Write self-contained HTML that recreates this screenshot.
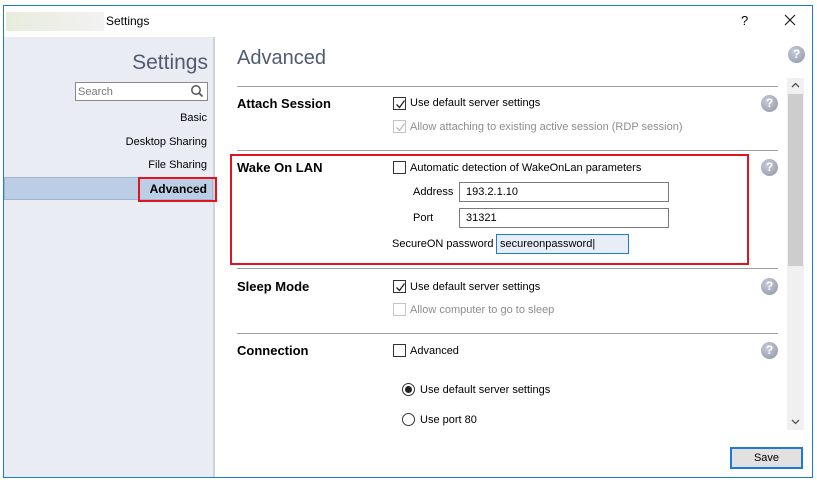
<!DOCTYPE html>
<html><head><style>
*{margin:0;padding:0;box-sizing:border-box}
body{width:817px;height:482px;background:#fff;position:relative;overflow:hidden;font-family:"Liberation Sans",sans-serif;font-size:11px;color:#000}
.a{position:absolute}
.t{position:absolute;white-space:nowrap}
.sep{position:absolute;left:237px;width:541px;height:1px;background:#a0a0a0}
.cb{position:absolute;width:13px;height:13px;border:1px solid #333;background:#fff}
.cb.g{border-color:#c4c4c4}
.cb svg{position:absolute;left:1px;top:1px}
.hl{position:absolute;width:17px;height:17px;border-radius:50%;background:radial-gradient(circle at 40% 35%,#c8ccd8,#8e94a8);color:#fff;font-weight:bold;font-size:12px;text-align:center;line-height:17px}
.in{position:absolute;height:20px;border:1px solid #7a7a7a;background:#fff;padding-left:6px;line-height:18px}
.b{font-weight:bold;font-size:13px}
.rad{position:absolute;width:13px;height:13px;border:1px solid #333;border-radius:50%;background:#fff}
</style></head><body>
<div class="a" style="left:3px;top:5px;width:810px;height:473px;border:1px solid #1e7ad6"></div>
<div class="a" style="left:6px;top:12px;width:98px;height:19px;background:linear-gradient(90deg,#e8ecdc,#f2f2f2)"></div>
<div class="t" style="left:106px;top:14px;font-size:12px">Settings</div>
<div class="t" style="left:741px;top:13px;font-size:13px">?</div>
<svg class="a" style="left:784px;top:14px" width="12" height="12"><path d="M1 1L11 11M11 1L1 11" stroke="#111" stroke-width="1.1"/></svg>
<div class="a" style="left:4px;top:37px;width:211px;height:440px;background:#e9edf3;border-right:2px solid #d0d4da"></div>
<div class="t" style="right:609px;top:51px;font-size:21px;color:#4f5b73">Settings</div>
<div class="a" style="left:75px;top:82px;width:133px;height:19px;border:1px solid #8a8a8a;background:#fff"></div>
<div class="t" style="left:78px;top:86px;color:#777">Search</div>
<svg class="a" style="left:190px;top:84px" width="14" height="14"><circle cx="6" cy="6" r="4.2" fill="none" stroke="#555" stroke-width="1.5"/><line x1="9" y1="9" x2="12.5" y2="12.5" stroke="#555" stroke-width="1.8"/></svg>
<div class="t" style="right:610px;top:112px">Basic</div>
<div class="t" style="right:610px;top:136px">Desktop Sharing</div>
<div class="t" style="right:610px;top:159px">File Sharing</div>
<div class="a" style="left:4px;top:177px;width:209px;height:23px;background:#bccde6;border:1px solid #9fb5d5"></div>
<div class="t b" style="right:610px;top:182px;font-size:12px">Advanced</div>
<div class="a" style="left:138px;top:177px;width:79px;height:25px;border:2px solid #e0141e"></div>
<div class="t" style="left:237px;top:47px;font-size:20px;color:#4f5b73">Advanced</div>
<div class="hl" style="left:788px;top:46px">?</div>
<div class="a" style="left:787px;top:78px;width:17px;height:352px;background:#f0f0f0"></div>
<div class="a" style="left:788px;top:94px;width:15px;height:172px;background:#cdcdcd"></div>
<svg class="a" style="left:791px;top:82px" width="9" height="6"><path d="M1 5L4.5 1.5 8 5" fill="none" stroke="#555" stroke-width="1.3"/></svg>
<svg class="a" style="left:791px;top:419px" width="9" height="6"><path d="M1 1L4.5 4.5 8 1" fill="none" stroke="#555" stroke-width="1.3"/></svg>
<div class="sep" style="top:86px"></div>
<div class="sep" style="top:150px"></div>
<div class="sep" style="top:268px"></div>
<div class="sep" style="top:333px"></div>
<div class="t b" style="left:237px;top:96px">Attach Session</div>
<div class="cb" style="left:393px;top:97px"><svg width="11" height="11"><path d="M1.5 5.5l3 3 5-7" fill="none" stroke="#222" stroke-width="1.3"/></svg></div>
<div class="t" style="left:410px;top:97px">Use default server settings</div>
<div class="cb g" style="left:393px;top:120px"><svg width="11" height="11"><path d="M1.5 5.5l3 3 5-7" fill="none" stroke="#bbb" stroke-width="1.3"/></svg></div>
<div class="t" style="left:410px;top:121px;color:#8d8d8d">Allow attaching to existing active session (RDP session)</div>
<div class="hl" style="left:761px;top:95px">?</div>
<div class="a" style="left:230px;top:154px;width:519px;height:111px;border:2px solid #e0141e"></div>
<div class="t b" style="left:237px;top:160px">Wake On LAN</div>
<div class="cb" style="left:393px;top:161px"></div>
<div class="t" style="left:410px;top:162px">Automatic detection of WakeOnLan parameters</div>
<div class="hl" style="left:761px;top:159px">?</div>
<div class="t" style="left:413px;top:186px">Address</div>
<div class="in" style="left:459px;top:182px;width:210px">193.2.1.10</div>
<div class="t" style="left:413px;top:212px">Port</div>
<div class="in" style="left:459px;top:208px;width:210px">31321</div>
<div class="t" style="left:392px;top:238px">SecureON password</div>
<div class="in" style="left:496px;top:234px;width:133px;border-color:#1e7ad6;background:#e8eef8;padding-left:3px">secureonpassword|</div>
<div class="t b" style="left:237px;top:279px">Sleep Mode</div>
<div class="cb" style="left:393px;top:280px"><svg width="11" height="11"><path d="M1.5 5.5l3 3 5-7" fill="none" stroke="#222" stroke-width="1.3"/></svg></div>
<div class="t" style="left:410px;top:281px">Use default server settings</div>
<div class="cb g" style="left:393px;top:303px"></div>
<div class="t" style="left:410px;top:304px;color:#8d8d8d">Allow computer to go to sleep</div>
<div class="hl" style="left:761px;top:278px">?</div>
<div class="t b" style="left:237px;top:343px">Connection</div>
<div class="cb" style="left:393px;top:344px"></div>
<div class="t" style="left:410px;top:345px">Advanced</div>
<div class="hl" style="left:761px;top:342px">?</div>
<div class="rad" style="left:402px;top:383px"><div class="a" style="left:2px;top:2px;width:7px;height:7px;border-radius:50%;background:#222"></div></div>
<div class="t" style="left:420px;top:384px">Use default server settings</div>
<div class="rad" style="left:402px;top:413px"></div>
<div class="t" style="left:420px;top:414px">Use port 80</div>
<div class="a" style="left:730px;top:447px;width:73px;height:22px;border:2px solid #1e7ad6;background:#e1e1e1;text-align:center;line-height:18px">Save</div>
</body></html>
